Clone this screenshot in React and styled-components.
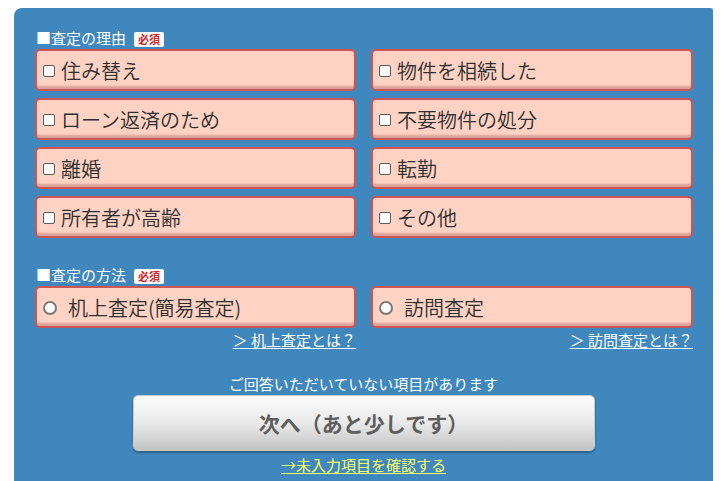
import React from "react";
import styled, { createGlobalStyle } from "styled-components";

const GlobalStyle = createGlobalStyle`
  html, body {
    margin: 0;
    padding: 0;
    background: #ffffff;
    font-family: "Noto Sans CJK JP", "Noto Sans", sans-serif;
  }
`;

const Panel = styled.div`
  margin: 8px 8px 0 14px;
  width: 699px;
  min-height: 473px;
  box-sizing: border-box;
  padding: 20px 20px 8px 21px;
  background: #3f87bd;
  border-radius: 8px 2px 0 0;
`;

const Section = styled.section`
  margin-bottom: ${(p) => p.$gap || 0}px;
`;

const Heading = styled.div`
  display: flex;
  align-items: center;
  gap: 8px;
  height: 20px;
  margin-left: 1px;
  margin-bottom: 1px;
  color: #ffffff;
  font-size: 15px;
  line-height: 20px;
`;

const Badge = styled.span`
  display: inline-block;
  background: #ffffff;
  color: #d0262c;
  font-size: 11px;
  font-weight: bold;
  line-height: 15px;
  padding: 0 4px;
  margin-top: 2px;
  border-radius: 2px;
`;

const Grid = styled.div`
  display: grid;
  grid-template-columns: 321px 322px;
  column-gap: 15px;
  row-gap: 7px;
`;

const Option = styled.label`
  display: flex;
  align-items: center;
  height: 42px;
  box-sizing: border-box;
  padding-left: 6px;
  background: #ffd2c3;
  border: 2px solid #cd5554;
  border-radius: 5px;
  box-shadow: inset 0 -4px 2px -1px rgba(120, 40, 40, 0.28);
  color: #2e2e2e;
  font-size: 20px;
  font-weight: 350;
  cursor: pointer;
`;

const Box = styled.span`
  display: inline-block;
  width: 10px;
  height: 10px;
  margin: 1px 6px 0 0;
  border: 1.5px solid #5a5a5a;
  border-radius: 2px;
  background: #fff;
`;

const Radio = styled.span`
  display: inline-block;
  width: 10px;
  height: 10px;
  margin: 1px 11px 0 0;
  border: 2px solid #7a7a7a;
  border-radius: 50%;
  background: #fff;
`;

const LinkRow = styled.div`
  display: grid;
  grid-template-columns: 321px 322px;
  column-gap: 15px;
  margin-top: 2px;
`;

const InfoLink = styled.a`
  justify-self: end;
  color: #ffffff;
  font-size: 15px;
  line-height: 20px;
  text-decoration: underline;
  text-underline-offset: 2px;
`;

const Footer = styled.div`
  display: flex;
  flex-direction: column;
  align-items: center;
  margin-top: 24px;
  margin-left: -1px;
`;

const Notice = styled.div`
  color: #ffffff;
  font-size: 15px;
  line-height: 20px;
`;

const NextButton = styled.button`
  width: 462px;
  height: 56px;
  margin-top: 1px;
  border: 1px solid #c8c8c8;
  border-radius: 5px;
  background: linear-gradient(#fbfbfb 0%, #e9e9e9 50%, #c4c4c4 100%);
  box-shadow: 0 2px 2px rgba(0, 0, 0, 0.3);
  color: #5e5e5e;
  font-family: inherit;
  font-size: 21px;
  font-weight: bold;
`;

const CheckLink = styled.a`
  margin-top: 4px;
  color: #ffff66;
  font-size: 15px;
  line-height: 20px;
  text-decoration: underline;
  text-underline-offset: 2px;
`;

const reasons = [
  "住み替え",
  "物件を相続した",
  "ローン返済のため",
  "不要物件の処分",
  "離婚",
  "転勤",
  "所有者が高齢",
  "その他",
];

const methods = ["机上査定(簡易査定)", "訪問査定"];

export default function App() {
  return (
    <>
      <GlobalStyle />
      <Panel>
        <Section $gap={27}>
          <Heading>
            <span>■査定の理由</span>
            <Badge>必須</Badge>
          </Heading>
          <Grid>
            {reasons.map((r) => (
              <Option key={r}>
                <Box />
                {r}
              </Option>
            ))}
          </Grid>
        </Section>
        <Section>
          <Heading>
            <span>■査定の方法</span>
            <Badge>必須</Badge>
          </Heading>
          <Grid>
            {methods.map((m) => (
              <Option key={m}>
                <Radio />
                {m}
              </Option>
            ))}
          </Grid>
          <LinkRow>
            <InfoLink href="#">＞ 机上査定とは？</InfoLink>
            <InfoLink href="#">＞ 訪問査定とは？</InfoLink>
          </LinkRow>
        </Section>
        <Footer>
          <Notice>ご回答いただいていない項目があります</Notice>
          <NextButton>次へ（あと少しです）</NextButton>
          <CheckLink href="#">→未入力項目を確認する</CheckLink>
        </Footer>
      </Panel>
    </>
  );
}
